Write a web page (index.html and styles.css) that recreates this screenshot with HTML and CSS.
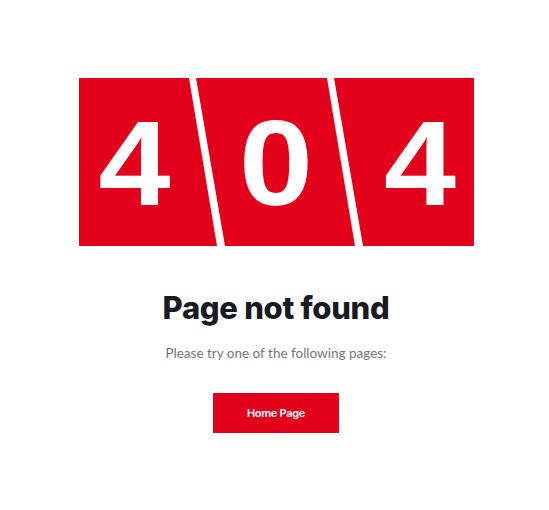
FILE: index.html
```html
<!DOCTYPE html>
<html lang="en">
<head>
<meta charset="utf-8">
<title>Page not found</title>
<link rel="stylesheet" href="styles.css">
</head>
<body>
<main class="page">
  <svg class="code" width="395" height="168" viewBox="0 0 395 168" aria-label="404">
    <rect x="0" y="0" width="395" height="168" fill="#e2001a"/>
    <polygon points="110,0 117,0 146,168 138,168" fill="#fff"/>
    <polygon points="248,0 255,0 284,168 276,168" fill="#fff"/>
    <text class="digit" transform="translate(55.5 127) scale(1.07 1)" text-anchor="middle">4</text>
    <text class="digit" transform="translate(197 127) scale(1.1 1)" text-anchor="middle">0</text>
    <text class="digit" transform="translate(341 127) scale(1.07 1)" text-anchor="middle">4</text>
  </svg>
  <h1 class="title">Page not found</h1>
  <p class="lead">Please try one of the following pages:</p>
  <a class="btn" href="#">Home Page</a>
</main>
</body>
</html>
```
FILE: styles.css
```css
html, body {
  margin: 0;
  padding: 0;
  background: #fff;
}
.page {
  display: flex;
  flex-direction: column;
  align-items: center;
  padding: 78px 0 0 3px;
}
.code {
  display: block;
}
.digit {
  font-family: "Liberation Sans", Arial, sans-serif;
  font-weight: 700;
  font-size: 121px;
  fill: #fff;
}
.title {
  margin: 42px 0 0;
  font-family: Inter, "Noto Sans", sans-serif;
  font-weight: 800;
  font-size: 31px;
  line-height: 40px;
  letter-spacing: -0.3px;
  color: #191a23;
}
.lead {
  margin: 16px 0 0;
  font-family: Lato, "Open Sans", sans-serif;
  font-weight: 400;
  font-size: 13.5px;
  line-height: 18px;
  color: #777;
}
.btn {
  margin-top: 31px;
  display: flex;
  align-items: center;
  justify-content: center;
  width: 126px;
  height: 40px;
  background: #e2001a;
  color: #fff;
  font-family: Inter, "Noto Sans", sans-serif;
  font-weight: 600;
  font-size: 11px;
  letter-spacing: -0.3px;
  text-decoration: none;
}
```
